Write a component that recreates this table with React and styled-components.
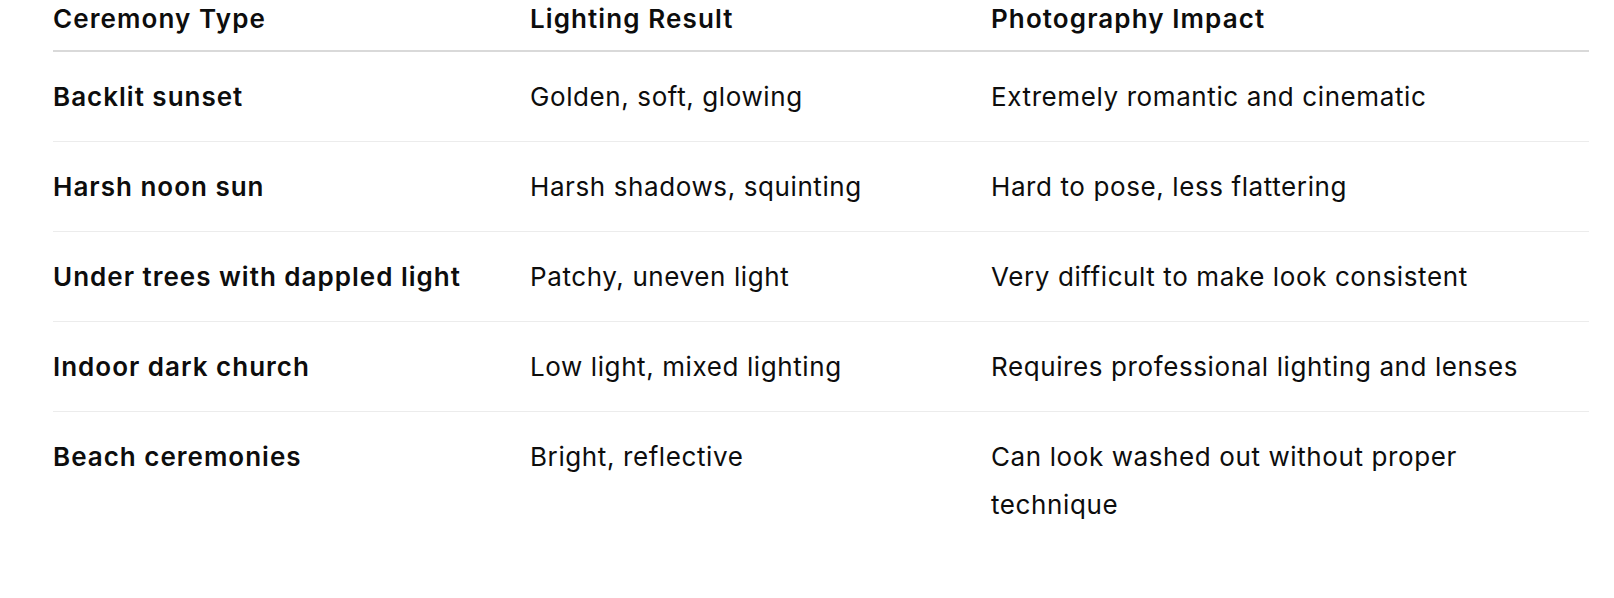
import React from "react";
import styled, { createGlobalStyle } from "styled-components";

const GlobalStyle = createGlobalStyle`
  html, body {
    margin: 0;
    padding: 0;
    background: #ffffff;
  }
  body {
    font-family: Inter, "Noto Sans", "Liberation Sans", sans-serif;
    color: #0d0d0d;
  }
`;

const Page = styled.div`
  padding: 0 25px 0 53px;
  width: 1536px;
`;

const Table = styled.table`
  width: 1536px;
  border-collapse: collapse;
  table-layout: fixed;
  font-size: 26px;
`;

const HeadCell = styled.th`
  text-align: left;
  font-weight: 600;
  letter-spacing: 1.1px;
  line-height: 37px;
  padding: 0 0 13px 0;
  border-bottom: 2px solid #d9d9d9;
  width: ${(p) => p.$w}px;
`;

const Row = styled.tr`
  border-bottom: ${(p) => (p.$last ? "none" : "1px solid #ececec")};
`;

const Cell = styled.td`
  vertical-align: top;
  padding: 20.5px 24px 20.5px 0;
  line-height: 48px;
  font-weight: ${(p) => (p.$strong ? 600 : 400)};
  letter-spacing: ${(p) => (p.$strong ? "1px" : "0.6px")};
`;

const rows = [
  ["Backlit sunset", "Golden, soft, glowing", "Extremely romantic and cinematic"],
  ["Harsh noon sun", "Harsh shadows, squinting", "Hard to pose, less flattering"],
  ["Under trees with dappled light", "Patchy, uneven light", "Very difficult to make look consistent"],
  ["Indoor dark church", "Low light, mixed lighting", "Requires professional lighting and lenses"],
  ["Beach ceremonies", "Bright, reflective", "Can look washed out without proper technique"],
];

export default function App() {
  return (
    <>
      <GlobalStyle />
      <Page>
        <Table>
          <thead>
            <tr>
              <HeadCell $w={477}>Ceremony Type</HeadCell>
              <HeadCell $w={461}>Lighting Result</HeadCell>
              <HeadCell $w={598}>Photography Impact</HeadCell>
            </tr>
          </thead>
          <tbody>
            {rows.map((r, i) => (
              <Row key={i} $last={i === rows.length - 1}>
                <Cell $strong>{r[0]}</Cell>
                <Cell>{r[1]}</Cell>
                <Cell>{r[2]}</Cell>
              </Row>
            ))}
          </tbody>
        </Table>
      </Page>
    </>
  );
}
